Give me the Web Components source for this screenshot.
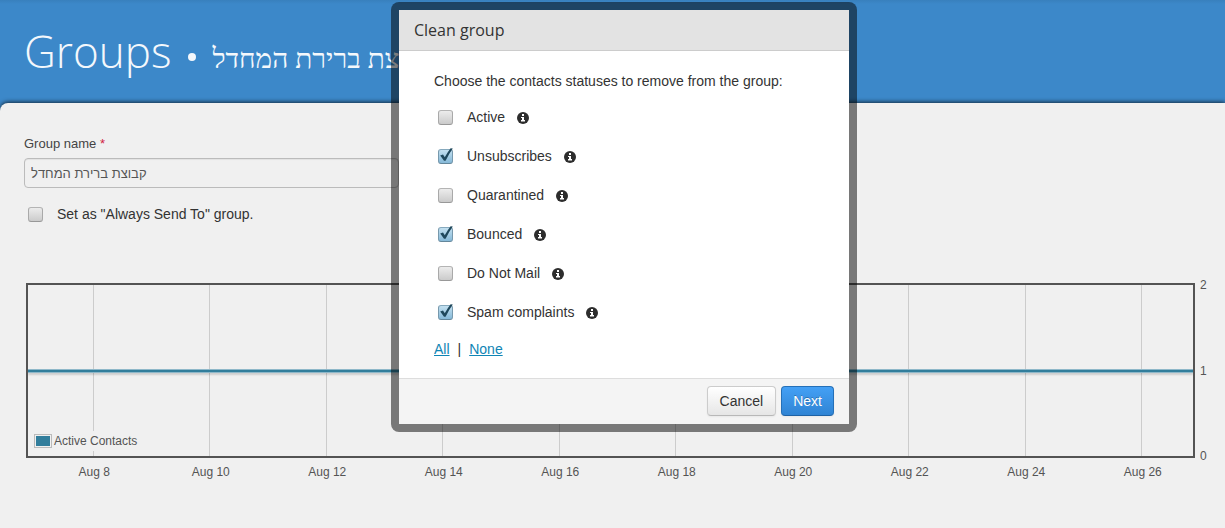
<!DOCTYPE html>
<html lang="en">
<head>
<meta charset="utf-8">
<title>Groups</title>
<style>
  html, body { margin: 0; min-height: 100%; background: #f0f0f0; }
  body { font: 14px/20px "Liberation Sans", Arial, sans-serif; color: #333; overflow: hidden; }
</style>
</head>
<body>
<groups-page></groups-page>

<script>
const define = (name, html, setup) => {
  const template = document.createElement('template');
  template.innerHTML = html;
  customElements.define(name, class extends HTMLElement {
    connectedCallback() {
      if (this.shadowRoot) return;
      this.attachShadow({ mode: 'open' }).append(template.content.cloneNode(true));
      if (setup) setup(this, this.shadowRoot);
    }
  });
};

define('check-option', `
  <style>
    :host { display: block; line-height: 20px; }
    label { display: flex; width: fit-content; align-items: center; gap: 14px; }
    .box { display: grid; width: 15px; height: 15px; }
    input, svg { grid-area: 1 / 1; }
    input {
      appearance: none; box-sizing: border-box; width: 15px; height: 15px; margin: 0;
      border: 1px solid #a9a9a9; border-color: #b4b4b4 #a9a9a9 #989898; border-radius: 3px;
      background: linear-gradient(#ececec, #cbcbcb);
    }
    input:checked { border-color: #86a9bd #7799ad #64879b; background: linear-gradient(#c3e0f0, #86b9d8); }
    svg { width: 15px; height: 15px; overflow: visible; display: none; pointer-events: none; }
    input:checked + svg { display: block; }
  </style>
  <label>
    <span class="box">
      <input type="checkbox">
      <svg viewBox="0 0 15 15" aria-hidden="true"><path d="M2.2 6.4 L5 5.4 L6.8 8.2 Q9.6 3 12.6 -.8 L14.8 -.4 Q10.6 5.4 7.6 11.8 L6 11.8 Z" fill="#1f485c"/></svg>
    </span>
    <slot></slot>
  </label>`,
  (host, root) => { root.querySelector('input').checked = host.hasAttribute('checked'); });

define('info-icon', `
  <style>
    :host { display: block; width: 12px; height: 12px; margin-top: 2px; }
    svg { display: block; }
  </style>
  <svg width="12" height="12" viewBox="0 0 12 12" aria-hidden="true">
    <circle cx="6" cy="6" r="6" fill="#2d2d2d"/>
    <path d="M5 2h2v2H5zM4 5h3v3h1v1.5H4V8h1V6H4z" fill="#fff"/>
  </svg>`);

define('page-header', `
  <style>
    :host { display: block; background: linear-gradient(#3880bd, #3c88c9 4px); color: #f4f8fc; }
    h1 { display: flex; align-items: baseline; margin: 0; padding: 19px 24px 20px; font: 300 44px/64px "Open Sans", sans-serif; white-space: nowrap; }
    .dot { width: 8px; height: 8px; margin: 12px 16px 0 17px; border-radius: 50%; background: currentColor; align-self: center; }
    .name { font: 28px/40px "Liberation Serif", "Times New Roman", serif; }
  </style>
  <h1><span>Groups</span><span class="dot"></span><span class="name"><slot></slot></span></h1>`);

define('group-form', `
  <style>
    :host { display: block; }
    .label { display: block; font-size: 13px; line-height: 20px; color: #444; }
    .label b { font-weight: normal; color: #d0213f; }
    input {
      display: block; box-sizing: border-box; width: 375px; max-width: 100%; height: 30px; margin: 4px 0 16px; padding: 0 6px;
      border: 1px solid #bbb; border-radius: 4px; background: #f0f0f0; color: #555;
      font: 13px "Liberation Sans", Arial, sans-serif;
      box-shadow: inset 0 1px 1px rgba(0,0,0,.06);
    }
    check-option { padding-left: 4px; }
  </style>
  <label class="label" for="name">Group name <b>*</b></label>
  <input id="name" type="text" value="קבוצת ברירת המחדל">
  <check-option>Set as "Always Send To" group.</check-option>`);

define('contacts-chart', `
  <style>
    :host { display: grid; grid-template-columns: 1fr 14px; column-gap: 5px; color: #545454; font-size: 12px; line-height: 16px; }
    .plot { position: relative; box-sizing: border-box; height: 175px; border: 2px solid #545454; overflow: hidden; display: grid; }
    .grid, .ticks { display: grid; grid-template-columns: repeat(10, 1fr); margin: 0 -7px 0 7px; }
    .grid { grid-area: 1 / 1; }
    .grid i { justify-self: center; width: 1px; background: #ccc; }
    .line { grid-area: 1 / 1; align-self: center; box-sizing: border-box; height: 4px; border: solid #8fb8c9; border-width: 1px 0; background: #327e9c; box-shadow: 0 2px 2px rgba(0,0,0,.14); }
    .legend { position: absolute; left: 5px; bottom: 5px; display: flex; align-items: center; gap: 2px; height: 20px; padding: 0 1px; background: #f0f0f0; }
    .legend i { width: 14px; height: 10px; border: 1px solid #bbb; padding: 1px; background: #327e9c content-box; }
    .scale { display: flex; flex-direction: column; justify-content: space-between; margin: -6px 0; }
    .ticks { margin: 6px -6px 0 10px; }
    .ticks span { text-align: center; }
  </style>
  <div class="plot">
    <div class="grid"></div>
    <div class="line"></div>
    <div class="legend"><i></i><span>Active Contacts</span></div>
  </div>
  <div class="scale"><span>2</span><span>1</span><span>0</span></div>
  <div class="ticks"></div>`,
  (host, root) => {
    for (let day = 8; day <= 26; day += 2) {
      root.querySelector('.grid').append(document.createElement('i'));
      const tick = document.createElement('span');
      tick.textContent = 'Aug ' + day;
      root.querySelector('.ticks').append(tick);
    }
  });

define('modal-dialog', `
  <style>
    :host { position: absolute; inset: 0; display: flex; justify-content: center; align-items: flex-start; padding: 2px 0 0 23px; }
    dialog {
      position: static; margin: 0; padding: 0; width: 450px; color: #333;
      border: 8px solid rgba(0,0,0,.5); border-radius: 8px; background: #fff padding-box;
    }
    h2 { margin: 0; padding: 0 15px; border-bottom: 1px solid #ccc; background: #e3e3e3; color: #333; font: 16px/40px "Open Sans", "Noto Sans", sans-serif; }
    .body { padding: 20px 35px 19px; }
    footer { display: flex; justify-content: flex-end; gap: 5px; padding: 7px 15px 8px; border-top: 1px solid #ddd; background: #f4f4f4; }
  </style>
  <dialog open aria-labelledby="title">
    <h2 id="title"><slot name="title"></slot></h2>
    <div class="body"><slot></slot></div>
    <footer><slot name="actions"></slot></footer>
  </dialog>`);

define('push-button', `
  <style>
    :host { display: block; }
    button {
      display: block; height: 30px; padding: 0 12px; border: 1px solid #ccc; border-bottom-color: #b8b8b8; border-radius: 4px;
      background: linear-gradient(#fff, #e6e6e6); color: #333; font: 14px "Liberation Sans", Arial, sans-serif;
      box-shadow: 0 1px 2px rgba(0,0,0,.05);
    }
    :host([primary]) button { padding: 0 11px; border-color: #2570b8 #2570b8 #1e62a5; background: linear-gradient(#44a0f5, #3084d4); color: #fff; text-shadow: 0 -1px 0 rgba(0,0,0,.25); }
  </style>
  <button type="button"><slot></slot></button>`);

define('clean-group', `
  <style>
    :host { display: block; }
    p { margin: 0; }
    ul { list-style: none; margin: 16px 0 17px; padding: 0 0 0 4px; display: grid; gap: 19px; }
    li { display: flex; align-items: center; gap: 12px; }
    a { color: #0f85b5; }
    .pick { display: flex; gap: 8px; }
  </style>
  <modal-dialog>
    <span slot="title">Clean group</span>
    <p>Choose the contacts statuses to remove from the group:</p>
    <ul>
      <li><check-option>Active</check-option><info-icon></info-icon></li>
      <li><check-option checked>Unsubscribes</check-option><info-icon></info-icon></li>
      <li><check-option>Quarantined</check-option><info-icon></info-icon></li>
      <li><check-option checked>Bounced</check-option><info-icon></info-icon></li>
      <li><check-option>Do Not Mail</check-option><info-icon></info-icon></li>
      <li><check-option checked>Spam complaints</check-option><info-icon></info-icon></li>
    </ul>
    <p class="pick"><a href="#all">All</a><span>|</span><a href="#none">None</a></p>
    <push-button slot="actions">Cancel</push-button>
    <push-button slot="actions" primary>Next</push-button>
  </modal-dialog>`);

define('groups-page', `
  <style>
    :host { display: block; background: #3c88c9; }
    main { padding: 31px 11px 40px 26px; border-radius: 8px 0 0 0; background: #f0f0f0; box-shadow: 0 -1px 4px rgba(0,0,0,.7); }
    group-form { margin: 0 0 59px -2px; }
  </style>
  <page-header>קבוצת ברירת המחדל</page-header>
  <main>
    <group-form></group-form>
    <contacts-chart></contacts-chart>
  </main>
  <clean-group></clean-group>`);
</script>
</body>
</html>
